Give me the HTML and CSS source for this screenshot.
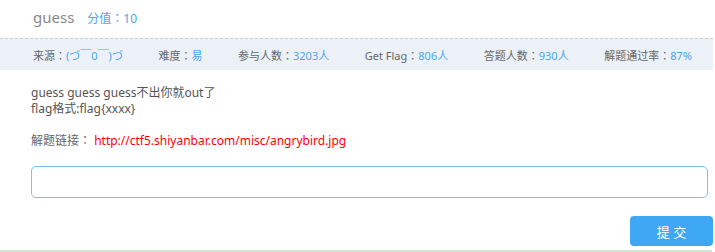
FILE: index.html
```html
<!DOCTYPE html>
<html lang="zh-CN">
<head>
    <meta charset="UTF-8">
    <link rel="stylesheet" href="styles.css">
    <title>guess</title>
</head>
<body>
    <div class="panel">
        <header class="title-row">
            <h2 class="title">guess</h2>
            <span class="score">分值<span class="sep" lang="ja">：</span>10</span>
        </header>
        <ul class="stats">
            <li>来源<span class="sep" lang="ja">：</span><span class="val">(づ￣0￣)づ</span></li>
            <li>难度<span class="sep" lang="ja">：</span><span class="val">易</span></li>
            <li>参与人数<span class="sep" lang="ja">：</span><span class="val">3203人</span></li>
            <li>Get Flag<span class="sep" lang="ja">：</span><span class="val">806人</span></li>
            <li>答题人数<span class="sep" lang="ja">：</span><span class="val">930人</span></li>
            <li>解题通过率<span class="sep" lang="ja">：</span><span class="val">87%</span></li>
        </ul>
        <section class="desc">
            <p class="intro">guess guess guess不出你就out了<br>flag格式:flag{xxxx}</p>
            <p class="link">解题链接<span class="sep" lang="ja">：</span> <a href="#">http://ctf5.shiyanbar.com/misc/angrybird.jpg</a></p>
        </section>
        <form class="answer">
            <input type="text" class="flag-input">
            <div class="actions">
                <button type="button" class="submit">提 交</button>
            </div>
        </form>
    </div>
    <div class="next"></div>
</body>
</html>
```

FILE: styles.css
```css
body {
  margin: 0;
  background: #fff;
  font-family: "Noto Sans", "Noto Sans CJK SC", sans-serif;
  color: #555;
}

.panel {
  width: 713px;
}

/* centred full-width colon, as in the original font */
.sep {
  font-family: "Noto Sans CJK JP", sans-serif;
}

.title-row {
  display: flex;
  align-items: baseline;
  height: 38px;
  padding: 0 0 0 33px;
  box-sizing: border-box;
}

.title {
  margin: 0;
  padding-top: 7px;
  font-size: 15px;
  font-weight: normal;
  color: #888;
}

.score {
  margin-left: 13px;
  font-size: 12px;
  color: #4aa6ee;
}

.stats {
  display: flex;
  justify-content: space-between;
  align-items: center;
  margin: 0;
  padding: 0 21px 0 33px;
  height: 31px;
  list-style: none;
  background: #ebf1f7;
  border-top: 1px dashed #c8ccd0;
  font-size: 11px;
  color: #666;
}

.stats .val {
  color: #4aa6ee;
}

.desc {
  padding: 15px 0 0 31px;
  font-size: 12px;
}

.desc p {
  margin: 0;
}

.intro {
  line-height: 16px;
  color: #555;
}

.link {
  margin-top: 14px !important;
  color: #666;
}

.link a {
  color: #f00;
  text-decoration: none;
}

.answer {
  padding: 17px 0 0 31px;
}

.flag-input {
  display: block;
  width: 677px;
  height: 32px;
  box-sizing: border-box;
  border: 1px solid #7dc0f7;
  border-radius: 5px;
  outline: none;
}

.actions {
  display: flex;
  justify-content: flex-end;
  padding-top: 18px;
}

.submit {
  width: 83px;
  height: 30px;
  border: none;
  border-radius: 4px;
  background: #3ea8f5;
  color: #fff;
  font-family: inherit;
  font-size: 13px;
}

.next {
  margin-top: 4px;
  width: 712px;
  height: 3px;
  background: #cfe7cb;
}
```
